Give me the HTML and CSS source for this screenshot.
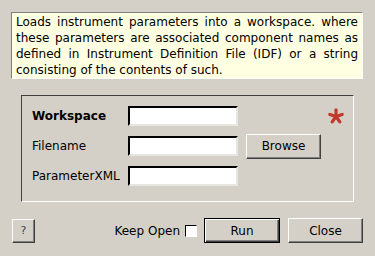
FILE: index.html
```html
<!DOCTYPE html>
<html lang="en">
<head>
  <meta charset="UTF-8">
  <title>LoadParameterFile</title>
  <link rel="stylesheet" href="styles.css">
</head>
<body>
  <div class="dialog">
    <p class="descricao">Loads instrument parameters into a workspace. where these parameters are associated component names as defined in Instrument Definition File (IDF) or a string consisting of the contents of such.</p>

    <div class="grupo">
      <label class="rotulo obrigatorio" for="ws">Workspace</label>
      <input type="text" id="ws">
      <span></span>
      <svg class="estrela" width="16" height="16" viewBox="0 0 16 16">
        <g stroke="#c0392b" stroke-width="3.2" stroke-linecap="round">
          <line x1="8" y1="8.5" x2="8" y2="1.8"/>
          <line x1="8" y1="8.5" x2="14.2" y2="6.4"/>
          <line x1="8" y1="8.5" x2="11.8" y2="13.9"/>
          <line x1="8" y1="8.5" x2="4.2" y2="13.9"/>
          <line x1="8" y1="8.5" x2="1.8" y2="6.4"/>
        </g>
      </svg>

      <label class="rotulo" for="fn">Filename</label>
      <input type="text" id="fn">
      <button class="botao">Browse</button>
      <span></span>

      <label class="rotulo" for="px">ParameterXML</label>
      <input type="text" id="px">
      <span></span>
      <span></span>
    </div>

    <div class="rodape">
      <button class="botao ajuda">?</button>
      <label class="manter">Keep Open <span class="caixa"></span></label>
      <button class="botao padrao">Run</button>
      <button class="botao">Close</button>
    </div>
  </div>
</body>
</html>
```

FILE: styles.css
```css
body { margin: 0; background: #d4d0c8; font-family: "DejaVu Sans", sans-serif; font-size: 12px; color: #000; }
.dialog { width: 375px; height: 256px; padding-top: 12px; box-sizing: border-box; }
.descricao { margin: 0 12px 0 11px; height: 67px; box-sizing: border-box; padding: 1px 4px 0 4px; background: #ffffe1; border: 1px solid; border-color: #808080 #fff #fff #808080; line-height: 16px; text-align: justify; }
.grupo { margin: 16px 21px 0 21px; height: 107px; box-sizing: border-box; padding: 5px 0 0 10px; border: 1px solid; border-color: #404040 #fff #fff #404040; display: grid; grid-template-columns: 96px 118px 75px 23px; grid-auto-rows: 30px; align-items: center; }
.rotulo { white-space: nowrap; }
.obrigatorio { font-weight: bold; }
input[type="text"] { width: 110px; height: 20px; box-sizing: border-box; margin: 0; padding: 0 2px; background: #fff; border: 2px solid; border-color: #000 #e8e6e0 #e8e6e0 #000; font: inherit; }
.botao { height: 25px; box-sizing: border-box; margin: 0; padding: 0; background: #d4d0c8; border: 1px solid; border-color: #fff #404040 #404040 #fff; box-shadow: inset -1px -1px #808080; font: inherit; color: #000; }
.grupo .botao { width: 75px; }
.estrela { display: block; margin-left: 7px; }
.rodape { display: flex; align-items: center; margin: 16px 0 0 12px; }
.ajuda { width: 23px; height: 24px; font-size: 11px; color: #444; }
.manter { display: flex; align-items: center; margin-left: auto; gap: 5px; }
.caixa { width: 10px; height: 10px; background: #fff; border: 1px solid; border-color: #000 #fff #fff #000; }
.padrao { width: 76px; margin-left: 7px; border: 1px solid #000; box-shadow: inset 1px 1px #fff, inset -1px -1px #404040, inset -2px -2px #808080; }
.rodape .botao:last-child { width: 75px; margin: 0 12px 0 8px; }
```
